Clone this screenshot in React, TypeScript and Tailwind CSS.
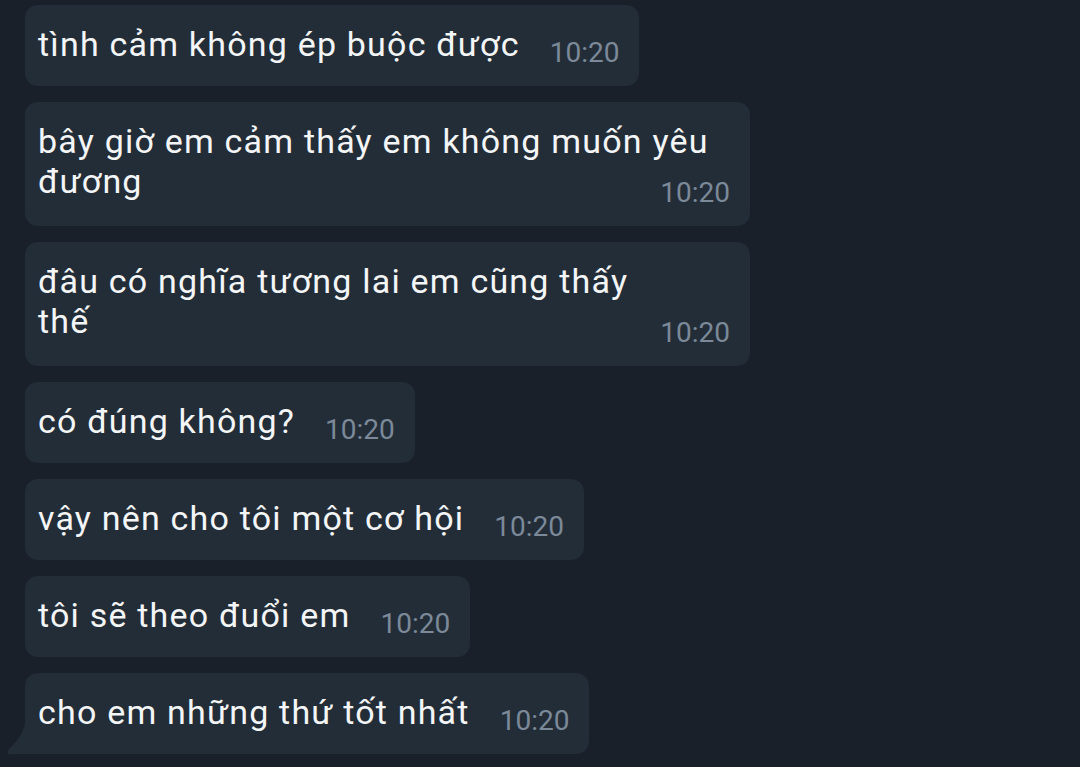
import React from 'react';

interface Msg {
  lines: string[];
  time: string;
}

const messages: Msg[] = [
  { lines: ['tình cảm không ép buộc được'], time: '10:20' },
  { lines: ['bây giờ em cảm thấy em không muốn yêu', 'đương'], time: '10:20' },
  { lines: ['đâu có nghĩa tương lai em cũng thấy', 'thế'], time: '10:20' },
  { lines: ['có đúng không?'], time: '10:20' },
  { lines: ['vậy nên cho tôi một cơ hội'], time: '10:20' },
  { lines: ['tôi sẽ theo đuổi em'], time: '10:20' },
  { lines: ['cho em những thứ tốt nhất'], time: '10:20' },
];

function Time({ t }: { t: string }) {
  return <span className="text-[28px] leading-[27px] tracking-normal text-[#7b8998] whitespace-nowrap">{t}</span>;
}

function Bubble({ msg, tail }: { msg: Msg; tail: boolean }) {
  const multi = msg.lines.length > 1;
  const last = msg.lines[msg.lines.length - 1];
  return (
    <div
      className={`relative self-start bg-[#232d38] text-[#f3f5f7] pl-[13px] pr-[20px] pt-[19px] pb-[20px] rounded-[13px] text-[34px] leading-[40px] tracking-[1.2px] whitespace-nowrap ${
        tail ? 'rounded-bl-none' : ''
      }`}
    >
      {multi ? (
        <div className="flex w-[692px] flex-col">
          {msg.lines.slice(0, -1).map((l, i) => (
            <div key={i}>{l}</div>
          ))}
          <div className="flex items-end justify-between">
            <div className="mb-[5px]">{last}</div>
            <Time t={msg.time} />
          </div>
        </div>
      ) : (
        <div className="flex items-end gap-[30px]">
          <div className="mb-[2px]">{last}</div>
          <Time t={msg.time} />
        </div>
      )}
      {tail && (
        <svg className="absolute left-[-18px] bottom-0" width="18" height="30" viewBox="0 0 18 30">
          <path d="M18 0 L18 30 L3 30 C0 30 -0.5 27.5 1.5 25.5 C8 19 15 12 18 0 Z" fill="#232d38" />
        </svg>
      )}
    </div>
  );
}

export default function App() {
  return (
    <div className="h-[767px] w-[1080px] overflow-hidden bg-[#19202a] font-['Roboto',sans-serif]">
      <div className="flex flex-col gap-4 pl-[25px] pt-[5px]">
        {messages.map((m, i) => (
          <Bubble key={i} msg={m} tail={i === messages.length - 1} />
        ))}
      </div>
    </div>
  );
}
